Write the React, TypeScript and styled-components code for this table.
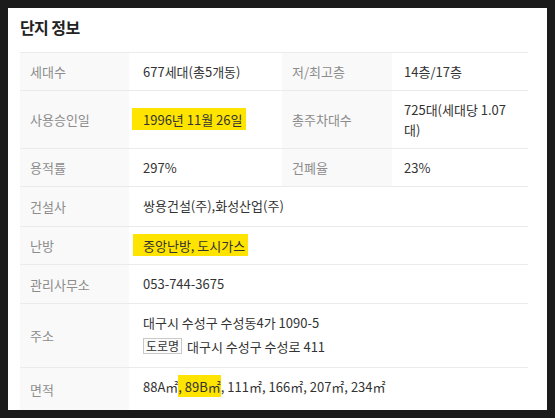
import { FC } from 'react';
import styled, { createGlobalStyle } from 'styled-components';

const GlobalStyle = createGlobalStyle`
  html, body {
    margin: 0;
    padding: 0;
  }

  body {
    background: #1b1b1b;
    padding: 8px;
    font-family: 'Noto Sans CJK KR', 'Noto Sans', sans-serif;
  }
`;

const Panel = styled.section`
  box-sizing: border-box;
  width: 539px;
  height: 402px;
  overflow: hidden;
  background: #fff;
  padding: 7px 19px 0 12px;
`;

const Title = styled.h2`
  margin: 0 0 13px;
  font-size: 16px;
  line-height: 24px;
  font-weight: 700;
  letter-spacing: -0.6px;
  color: #222;
`;

const Table = styled.table`
  width: 508px;
  border-collapse: collapse;
  table-layout: fixed;
  font-size: 13px;
  line-height: 20px;
`;

const Row = styled.tr`
  border-top: 1px solid #ebebeb;
  border-bottom: 1px solid #ebebeb;
`;

const Label = styled.th`
  padding: 9px 10px 8px;
  background: #f9f9f9;
  color: #8c8c8c;
  font-weight: 400;
  text-align: left;
  vertical-align: middle;
`;

const Value = styled.td<{ $pad?: number; $bottom?: number }>`
  padding: 9px 12px ${(props) => props.$bottom ?? 8}px ${(props) => props.$pad ?? 14}px;
  color: #333;
  vertical-align: middle;
  word-break: keep-all;
`;

const Mark = styled.span<{ $lead?: number; $tail?: number }>`
  background: #ffe400;
  margin-left: ${(props) => -(props.$lead ?? 0)}px;
  padding: 2px ${(props) => props.$tail ?? 0}px 1px ${(props) => props.$lead ?? 0}px;
`;

const Line = styled.div<{ $gap?: number }>`
  margin-top: ${(props) => props.$gap ?? 0}px;
`;

const Badge = styled.span`
  display: inline-block;
  box-sizing: border-box;
  height: 16px;
  padding: 0 2px;
  margin-right: 2px;
  border: 1px solid #c9c9c9;
  background: #fbfbfb;
  font-size: 12px;
  line-height: 14px;
  color: #333;
  vertical-align: 1px;
`;

const App: FC = () => (
  <>
    <GlobalStyle />
    <Panel>
      <Title>단지 정보</Title>
      <Table>
        <colgroup>
          <col style={{ width: 109 }} />
          <col style={{ width: 153 }} />
          <col style={{ width: 110 }} />
          <col style={{ width: 136 }} />
        </colgroup>
        <tbody>
          <Row>
            <Label>세대수</Label>
            <Value>677세대(총5개동)</Value>
            <Label>저/최고층</Label>
            <Value $pad={12}>14층/17층</Value>
          </Row>
          <Row>
            <Label>사용승인일</Label>
            <Value>
              <Mark $lead={11} $tail={4}>1996년 11월 26일</Mark>
            </Value>
            <Label>총주차대수</Label>
            <Value $pad={12}>725대(세대당 1.07 대)</Value>
          </Row>
          <Row>
            <Label>용적률</Label>
            <Value>297%</Value>
            <Label>건폐율</Label>
            <Value $pad={12}>23%</Value>
          </Row>
          <Row>
            <Label>건설사</Label>
            <Value colSpan={3} $bottom={10}>쌍용건설(주),화성산업(주)</Value>
          </Row>
          <Row>
            <Label>난방</Label>
            <Value colSpan={3}>
              <Mark $lead={10} $tail={3}>중앙난방, 도시가스</Mark>
            </Value>
          </Row>
          <Row>
            <Label>관리사무소</Label>
            <Value colSpan={3} $bottom={9}>053-744-3675</Value>
          </Row>
          <Row>
            <Label>주소</Label>
            <Value colSpan={3} $bottom={10}>
              <Line>대구시 수성구 수성동4가 1090-5</Line>
              <Line $gap={4}>
                <Badge>도로명</Badge> 대구시 수성구 수성로 411
              </Line>
            </Value>
          </Row>
          <Row>
            <Label>면적</Label>
            <Value colSpan={3} $bottom={14}>
              88A㎡<Mark>, 89B㎡</Mark>, 111㎡, 166㎡, 207㎡, 234㎡
            </Value>
          </Row>
        </tbody>
      </Table>
    </Panel>
  </>
);

export default App;
